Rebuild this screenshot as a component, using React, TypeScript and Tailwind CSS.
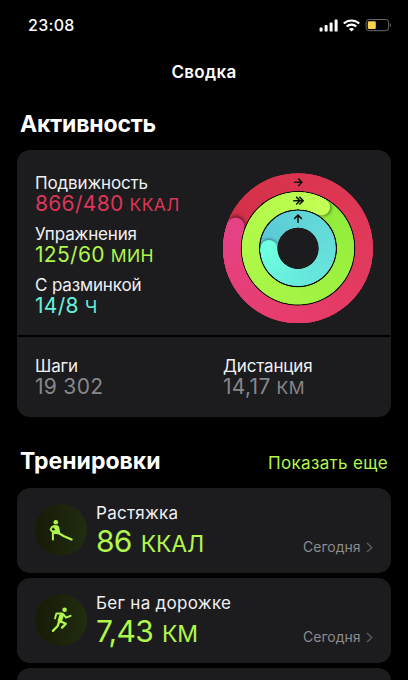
import React from "react";

type RGB = [number, number, number];

const CX = 75;
const CY = 75;

const point = (r: number, deg: number) => {
  const a = (deg * Math.PI) / 180;
  return [CX + r * Math.sin(a), CY - r * Math.cos(a)];
};

const mix = (stops: RGB[], t: number) => {
  const p = Math.min(t, 0.9999) * (stops.length - 1);
  const i = Math.floor(p);
  const f = p - i;
  const c = stops[i].map((v, k) => Math.round(v + (stops[i + 1][k] - v) * f));
  return `rgb(${c.join(",")})`;
};

interface RingProps {
  id: string;
  radius: number;
  width: number;
  head: number;
  stops: RGB[];
}

const STEPS = 120;
const SPAN = 360 / STEPS;

function Ring({ id, radius, width, head, stops }: RingProps) {
  const [hx, hy] = point(radius, head);
  const [sx, sy] = point(radius, head + 2);
  const outer = radius + width / 2;
  const inner = radius - width / 2;
  const segment = (i: number, overlap: number) => {
    const [x1, y1] = point(radius, head + i * SPAN);
    const [x2, y2] = point(radius, head + (i + 1) * SPAN + overlap);
    return (
      <path
        key={i}
        d={`M${x1} ${y1}A${radius} ${radius} 0 0 1 ${x2} ${y2}`}
        stroke={mix(stops, i / STEPS)}
        strokeWidth={width}
        fill="none"
      />
    );
  };
  return (
    <g>
      <clipPath id={id}>
        <path
          clipRule="evenodd"
          d={`M${CX - outer} ${CY}a${outer} ${outer} 0 1 0 ${outer * 2} 0a${outer} ${outer} 0 1 0 ${-outer * 2} 0ZM${CX - inner} ${CY}a${inner} ${inner} 0 1 0 ${inner * 2} 0a${inner} ${inner} 0 1 0 ${-inner * 2} 0Z`}
        />
      </clipPath>
      <circle cx={CX} cy={CY} r={radius} stroke={mix(stops, 0.5)} strokeWidth={width - 0.4} fill="none" />
      {Array.from({ length: STEPS }, (_, i) => segment(i, i < STEPS - 1 ? 4 : 0))}
      <g clipPath={`url(#${id})`}>
        <circle cx={sx} cy={sy} r={width / 2} fill="#000" opacity="0.42" filter="url(#soft)" />
      </g>
      {Array.from({ length: 14 }, (_, k) => segment(STEPS - 14 + k, k < 13 ? 2.5 : 0.2))}
      <circle cx={hx} cy={hy} r={width / 2} fill={mix(stops, 1)} />
    </g>
  );
}

function Rings() {
  return (
    <svg width="150" height="150" viewBox="0 0 150 150">
      <defs>
        <filter id="soft" x="-50%" y="-50%" width="200%" height="200%">
          <feGaussianBlur stdDeviation="1.6" />
        </filter>
      </defs>
      <g transform="translate(0 0.3)">
        <circle cx="75" cy="75" r="60" fill="#0c100c" />
        <Ring id="move" radius={66.2} width={17.4} head={289.5} stops={[[210, 48, 72], [221, 54, 82], [226, 58, 94], [231, 62, 112], [229, 66, 134]]} />
        <Ring id="exercise" radius={47.6} width={16.8} head={30} stops={[[144, 236, 58], [156, 241, 64], [168, 245, 70], [178, 250, 74], [194, 254, 84]]} />
        <Ring id="stand" radius={29.1} width={16.8} head={270} stops={[[90, 200, 214], [96, 212, 216], [102, 222, 218], [104, 234, 220], [110, 255, 224]]} />
        <circle cx="75" cy="75" r="20.6" fill="#1c1c1e" />
        <g stroke="#11130d" strokeWidth="1.5" fill="none">
          <path d="M71.2 9H78.6M75.2 5.3L78.9 9L75.2 12.7" />
          <path d="M70.2 27.4H79.6M73.2 23.6L77 27.4L73.2 31.2M76.4 23.6L80.2 27.4L76.4 31.2" />
          <path d="M75 49.6V42M71.2 45.6L75 41.8L78.8 45.6" />
        </g>
      </g>
    </svg>
  );
}

interface MetricProps {
  label: string;
  value: string;
  unit?: string;
  color: string;
}

function Metric({ label, value, unit, color }: MetricProps) {
  return (
    <div className="whitespace-nowrap">
      <div className="h-5 text-[17px] leading-5 tracking-[-0.15px] text-[#f0f0f2]">{label}</div>
      <div className={`flex h-[22px] items-baseline gap-[6px] leading-[22px] ${color}`}>
        <span className="text-[21px] tracking-[0.3px]">{value}</span>
        {unit && <span className="text-[17.5px] tracking-[0.4px]">{unit}</span>}
      </div>
    </div>
  );
}

function StretchIcon() {
  return (
    <svg width="24" height="24" viewBox="0 0 24 24" fill="none" stroke="#b0f64b" strokeLinecap="round" strokeLinejoin="round">
      <circle cx="6.8" cy="4.2" r="2.3" fill="#b0f64b" stroke="none" />
      <path d="M4.6 7.2H8.2Q9.8 7.4 10.2 9.4L11.2 14.6L8.8 16.4L5.4 14.2L6.4 12L4 9Z" fill="#b0f64b" stroke="none" />
      <path d="M5.4 8.2L3 8.9L1.6 11.6L3.4 13.6L6.4 13" strokeWidth="1.9" />
      <path d="M7.6 14.9H3.9V21.6" strokeWidth="2" />
      <path d="M9.4 15L15 18.2L22.6 21.6" strokeWidth="2.2" />
    </svg>
  );
}

function RunIcon() {
  return (
    <svg width="24" height="26" viewBox="0 0 24 26" fill="none" stroke="#b0f64b" strokeLinecap="round" strokeLinejoin="round">
      <circle cx="15.6" cy="2.8" r="2.3" fill="#b0f64b" stroke="none" />
      <path d="M12.8 7.8L10.8 13.8" strokeWidth="4.4" />
      <path d="M12 6.5H7.4L6 11.4" strokeWidth="1.9" />
      <path d="M14.4 7.4L17 10.7L21.6 8.8" strokeWidth="1.9" />
      <path d="M10.2 14.6L8.6 19L3.9 23.9" strokeWidth="2.3" />
      <path d="M11.4 14.2L16.8 16.8L13 20.6" strokeWidth="2.3" />
    </svg>
  );
}

interface WorkoutProps {
  icon: React.ReactNode;
  title: string;
  value: string;
  unit: string;
}

function Workout({ icon, title, value, unit }: WorkoutProps) {
  return (
    <div className="flex h-[84.5px] rounded-[13px] bg-[#1c1c1e] pr-[18px] pl-[18px]">
      <div className="mt-4 flex size-[52px] shrink-0 items-center justify-center rounded-full bg-linear-to-r from-[#161b07] to-[#212c10]">
        {icon}
      </div>
      <div className="ml-[9px] flex-1 pt-[15px] whitespace-nowrap">
        <div className="h-5 text-[17px] leading-5 tracking-[0.3px] text-[#f0f0f2]">{title}</div>
        <div className="flex h-9 items-baseline gap-[9px] leading-9 text-[#b0f64b]">
          <span className="text-[30px] tracking-[-0.7px]">{value}</span>
          <span className="text-[23px] tracking-[-0.2px]">{unit}</span>
        </div>
      </div>
      <div className="mt-[49px] flex h-5 items-center text-[14px] leading-5 text-[#8b8b90]">
        <span>Сегодня</span>
        <svg className="ml-[5px]" width="7" height="11" viewBox="0 0 7 11" fill="none" stroke="#5b5b5f" strokeWidth="1.4">
          <path d="M1 1L5.8 5.5L1 10" />
        </svg>
      </div>
    </div>
  );
}

export default function App() {
  return (
    <div className="h-[680px] w-[408px] overflow-hidden bg-black font-['Inter','Liberation_Sans',sans-serif] text-white">
      <header className="flex h-[50px] items-start justify-between pr-[16px] pl-7">
        <div className="mt-[15px] text-[16px] leading-5 font-medium tracking-[0.3px]">23:08</div>
        <div className="mt-[18px] flex items-center">
          <svg width="20" height="13" viewBox="0 0 20 13" fill="#fff">
            <rect x="0.6" y="8.6" width="3" height="4" rx="0.9" />
            <rect x="5.6" y="6" width="3" height="6.6" rx="0.9" />
            <rect x="10.6" y="3.6" width="3" height="9" rx="0.9" />
            <rect x="15.6" y="0.6" width="3" height="12" rx="0.9" />
          </svg>
          <svg className="ml-[4px]" width="17" height="13" viewBox="0 0 17 13" fill="none" stroke="#fff" strokeWidth="2.1">
            <path d="M0.8 4.6C5 0.4 12 0.4 16.2 4.6" />
            <path d="M3.7 7.6C6.4 5 10.6 5 13.3 7.6" />
            <path d="M8.5 12.6L5.9 9.9C7.3 8.6 9.7 8.6 11.1 9.9Z" fill="#fff" stroke="none" />
          </svg>
          <svg className="ml-[4px]" width="28" height="14" viewBox="0 0 28 14">
            <rect x="2.1" y="1.5" width="22.6" height="11.2" rx="3" fill="none" stroke="#69696b" />
            <rect x="3.8" y="3.2" width="8" height="7.8" rx="1.3" fill="#fad14b" />
            <path d="M26 5C27.3 5.6 27.3 8.4 26 9Z" fill="#69696b" />
          </svg>
        </div>
      </header>

      <h1 className="mt-3 text-center text-[17px] leading-5 font-semibold tracking-[0.3px]">Сводка</h1>

      <h2 className="mt-[27px] ml-5 h-[30px] text-[23px] leading-[30px] font-bold tracking-[-0.15px]">Активность</h2>

      <section className="mx-[17px] mt-[11px] w-[373.5px] overflow-hidden rounded-[13px]">
        <div className="flex h-[185px] justify-between bg-[#1c1c1e] pt-[23px] pr-[17.5px] pl-[18px]">
          <div className="flex flex-col gap-[9px]">
            <Metric label="Подвижность" value="866/480" unit="ККАЛ" color="text-[#dc3559]" />
            <Metric label="Упражнения" value="125/60" unit="МИН" color="text-[#b0f64b]" />
            <Metric label="С разминкой" value="14/8" unit="Ч" color="text-[#68f0dc]" />
          </div>
          <Rings />
        </div>
        <div className="mt-[2px] flex h-[80px] bg-[#1c1c1e] pt-[19px] pl-[18px]">
          <div className="w-[188px]">
            <Metric label="Шаги" value="19 302" color="text-[#87878b]" />
          </div>
          <Metric label="Дистанция" value="14,17" unit="КМ" color="text-[#87878b]" />
        </div>
      </section>

      <div className="mt-[29px] flex h-[30px] items-baseline justify-between pr-5 pl-5 leading-[30px]">
        <h2 className="text-[23px] font-bold">Тренировки</h2>
        <span className="text-[17px] tracking-[0.35px] text-[#b0f64b]">Показать еще</span>
      </div>

      <section className="mx-[17px] mt-3 flex w-[373.5px] flex-col gap-[5.5px]">
        <Workout icon={<StretchIcon />} title="Растяжка" value="86" unit="ККАЛ" />
        <Workout icon={<RunIcon />} title="Бег на дорожке" value="7,43" unit="КМ" />
        <div className="h-[84.5px] rounded-[13px] bg-[#1c1c1e]" />
      </section>
    </div>
  );
}
